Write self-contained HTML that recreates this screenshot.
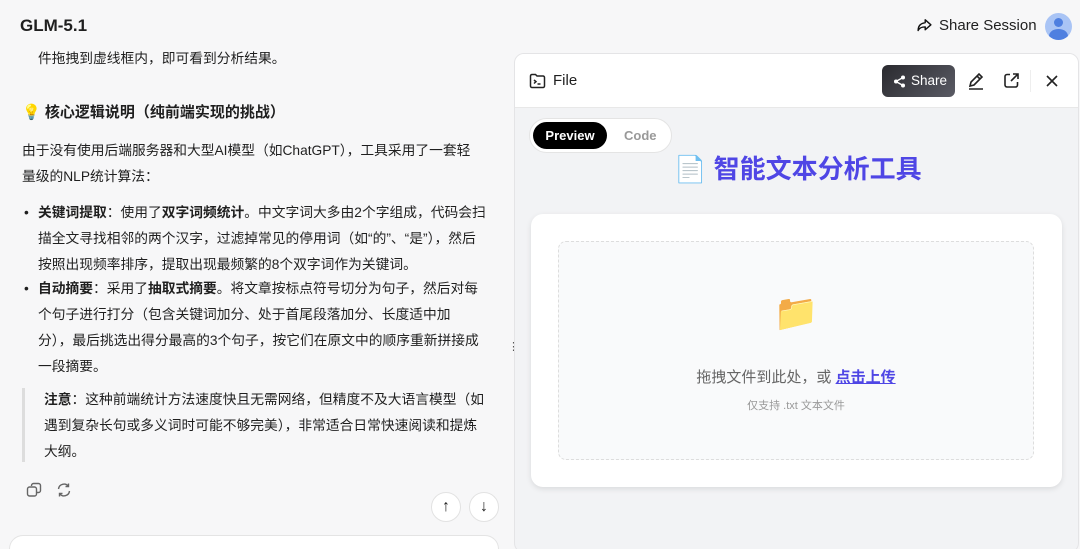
<!DOCTYPE html><html><head><meta charset="utf-8"><style>
*{margin:0;padding:0;box-sizing:border-box}
html,body{width:1080px;height:549px;overflow:hidden}
body{background:#f7f7f8;font-family:"Liberation Sans","Noto Sans CJK SC",sans-serif;color:#1f1f1f;position:relative}
.a{position:absolute;white-space:nowrap}
.t{font-size:13.75px;line-height:26px}
b{font-weight:700}
</style></head><body>
<div class="a" style="left:20px;top:16px;font-size:17px;font-weight:600">GLM-5.1</div>
<div class="a" style="left:916px;top:17px;font-size:15px;display:flex;align-items:center;gap:6px">
<svg width="17" height="17" viewBox="0 0 24 24" fill="none" stroke="#111" stroke-width="2" stroke-linejoin="round"><path d="M13 4l8 7-8 7v-4c-5 0-8 1-10 5 0-6 3-10 10-11z"/></svg>Share Session</div>
<div class="a" style="left:1045px;top:13px;width:27px;height:27px;border-radius:50%;background:#a9c4f5;overflow:hidden"><div style="position:absolute;left:9px;top:5px;width:9px;height:9px;border-radius:50%;background:#4e7fe0"></div><div style="position:absolute;left:4px;top:16px;width:19px;height:14px;border-radius:50%;background:#4e7fe0"></div></div>

<div class="a t" style="left:38px;top:46px">件拖拽到虚线框内，即可看到分析结果。</div>
<div class="a" style="left:22px;top:101px;font-size:15px;font-weight:700">💡 核心逻辑说明（纯前端实现的挑战）</div>
<div class="a t" style="left:22px;top:138px">由于没有使用后端服务器和大型AI模型（如ChatGPT），工具采用了一套轻<br>量级的NLP统计算法：</div>
<div class="a t" style="left:24px;top:200px">•</div>
<div class="a t" style="left:38px;top:200px"><b>关键词提取</b>：使用了<b>双字词频统计</b>。中文字词大多由2个字组成，代码会扫<br>描全文寻找相邻的两个汉字，过滤掉常见的停用词（如“的”、“是”），然后<br>按照出现频率排序，提取出现最频繁的8个双字词作为关键词。</div>
<div class="a t" style="left:24px;top:276px">•</div>
<div class="a t" style="left:38px;top:276px"><b>自动摘要</b>：采用了<b>抽取式摘要</b>。将文章按标点符号切分为句子，然后对每<br>个句子进行打分（包含关键词加分、处于首尾段落加分、长度适中加<br>分），最后挑选出得分最高的3个句子，按它们在原文中的顺序重新拼接成<br>一段摘要。</div>
<div class="a" style="left:22px;top:388px;width:3px;height:74px;background:#ddd"></div>
<div class="a t" style="left:44px;top:387px"><b>注意</b>：这种前端统计方法速度快且无需网络，但精度不及大语言模型（如<br>遇到复杂长句或多义词时可能不够完美），非常适合日常快速阅读和提炼<br>大纲。</div>
<svg class="a" style="left:26px;top:482px" width="16" height="16" viewBox="0 0 16 16" fill="none" stroke="#666" stroke-width="1.4"><rect x="1.5" y="5" width="9" height="9" rx="2"/><path d="M5.5 4V3.5a2 2 0 012-2h5a2 2 0 012 2v5a2 2 0 01-2 2H11"/></svg>
<svg class="a" style="left:56px;top:482px" width="16" height="16" viewBox="0 0 16 16" fill="none" stroke="#666" stroke-width="1.4"><path d="M2.5 7a5.5 5.5 0 0110-2.5M13.5 9a5.5 5.5 0 01-10 2.5M12.5 1.5v3h-3M3.5 14.5v-3h3"/></svg>
<div class="a" style="left:431px;top:492px;width:30px;height:30px;border-radius:50%;background:#fff;border:1px solid #e2e2e2;text-align:center;line-height:28px;font-size:16px">↑</div>
<div class="a" style="left:469px;top:492px;width:30px;height:30px;border-radius:50%;background:#fff;border:1px solid #e2e2e2;text-align:center;line-height:28px;font-size:16px">↓</div>
<div class="a" style="left:9px;top:535px;width:490px;height:40px;border-radius:14px;background:#fff;border:1px solid #e4e4e4"></div>
<div class="a" style="left:508px;top:340px;font-size:11px;color:#555">⋮</div>

<div class="a" style="left:514px;top:53px;width:565px;height:500px;border-radius:10px;border:1px solid #e4e4e6;background:#f2f3f5;overflow:hidden">
 <div style="height:54px;background:#fff;border-bottom:1px solid #e8e8e8;position:relative">
  <svg class="a" style="left:14px;top:19px" width="17" height="16" viewBox="0 0 17 16" fill="none" stroke="#222" stroke-width="1.5"><path d="M1.5 3a1.5 1.5 0 011.5-1.5h3.5l1.5 1.5h6a1.5 1.5 0 011.5 1.5V13a1.5 1.5 0 01-1.5 1.5H3A1.5 1.5 0 011.5 13z"/><path d="M5 7l2 1.7L5 10.5M8.5 11h3"/></svg>
  <div class="a" style="left:38px;top:18px;font-size:15px">File</div>
  <div class="a" style="left:367px;top:11px;width:73px;height:32px;border-radius:6px;background:linear-gradient(135deg,#2a2a2f,#5a5b64);color:#fff;font-size:13.5px;line-height:32px;padding-left:29px">Share
   <svg class="a" style="left:11px;top:10px" width="13" height="13" viewBox="0 0 13 13" fill="#fff"><circle cx="10" cy="2.5" r="2"/><circle cx="3" cy="6.5" r="2"/><circle cx="10" cy="10.5" r="2"/><path d="M3 6.5L10 2.5M3 6.5L10 10.5" stroke="#fff" stroke-width="1.3"/></svg></div>
  <svg class="a" style="left:452px;top:18px" width="18" height="18" viewBox="0 0 18 18" fill="none" stroke="#222" stroke-width="1.6"><path d="M3 14l1-4L12 2l3 3-8 8-4 1zM10 4l3 3M2 17h14"/></svg>
  <svg class="a" style="left:488px;top:18px" width="17" height="17" viewBox="0 0 17 17" fill="none" stroke="#222" stroke-width="1.6"><path d="M7 2.5H4A2 2 0 002 4.5v8.5a2 2 0 002 2h8.5a2 2 0 002-2V10M10 2h5v5M15 2L8 9"/></svg>
  <div class="a" style="left:515px;top:16px;width:1px;height:22px;background:#eee"></div>
  <svg class="a" style="left:530px;top:20px" width="14" height="14" viewBox="0 0 14 14" stroke="#222" stroke-width="1.6"><path d="M2 2l10 10M12 2L2 12"/></svg>
 </div>
 <div class="a" style="left:14px;top:64px;width:143px;height:35px;border-radius:18px;background:#fff;border:1px solid #e4e4e4">
  <div class="a" style="left:3px;top:3px;width:74px;height:27px;border-radius:14px;background:#000;color:#fff;font-size:13px;font-weight:700;line-height:27px;text-align:center">Preview</div>
  <div class="a" style="left:94px;top:3px;font-size:13px;color:#999;font-weight:700;line-height:27px">Code</div>
 </div>
 <div class="a" style="left:159px;top:95px;font-size:26px;font-weight:700;color:#4f46e5">📄 智能文本分析工具</div>
 <div class="a" style="left:16px;top:160px;width:531px;height:273px;border-radius:12px;background:#fff;box-shadow:0 2px 6px rgba(0,0,0,.1)">
  <div class="a" style="left:27px;top:27px;width:476px;height:219px;border:1.5px dashed #ddd;border-radius:8px;background:#f9fafb">
   <div class="a" style="left:0;width:100%;top:50px;text-align:center;font-size:36px">📁</div>
   <div class="a" style="left:0;width:100%;top:124px;text-align:center;font-size:15px;color:#666">拖拽文件到此处，或 <span style="color:#4f46e5;font-weight:700;text-decoration:underline">点击上传</span></div>
   <div class="a" style="left:0;width:100%;top:155px;text-align:center;font-size:11px;color:#999">仅支持 .txt 文本文件</div>
  </div>
 </div>
</div>
</body></html>
